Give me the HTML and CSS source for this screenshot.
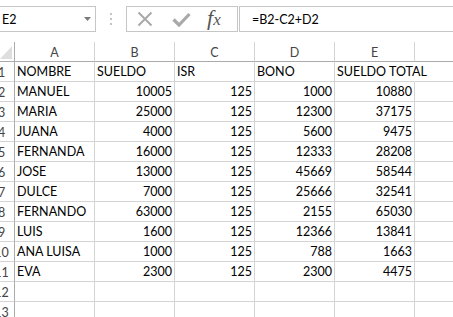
FILE: index.html
```html
<!DOCTYPE html>
<html lang="es">
<head>
<meta charset="utf-8">
<title>Hoja</title>
<link rel="stylesheet" href="styles.css">
</head>
<body>
<div class="toolbar">
  <div class="namebox"><span>E2</span><svg class="arrow" width="7" height="4" viewBox="0 0 7 4"><path d="M0 0H7L3.5 4Z" fill="#7a7a7a"/></svg></div>
  <div class="grip"><i></i><i></i><i></i></div>
  <div class="fbuttons">
    <svg class="ico-x" width="16" height="16" viewBox="0 0 16 16"><path d="M1.5 1.5L14.5 14.5M14.5 1.5L1.5 14.5" stroke="#a9a9a9" stroke-width="2" fill="none"/></svg>
    <svg class="ico-ok" width="19" height="15" viewBox="0 0 19 15"><path d="M1.5 7.5L7 13L17.5 2" stroke="#a9a9a9" stroke-width="3.2" fill="none"/></svg>
    <span class="fx">f<span class="fx-x">x</span></span>
  </div>
  <div class="finput">=B2-C2+D2</div>
</div>
<div class="sheet">
  <div class="corner"><svg width="12" height="13" viewBox="0 0 12 13"><path d="M12 0V13H0Z" fill="#dedede"/></svg></div>
  <div class="ch">A</div><div class="ch">B</div><div class="ch">C</div><div class="ch">D</div><div class="ch">E</div><div class="ch"></div>

  <div class="rh">1</div><div class="c">NOMBRE</div><div class="c">SUELDO</div><div class="c">ISR</div><div class="c">BONO</div><div class="c spill">SUELDO TOTAL</div><div class="c"></div>
  <div class="rh">2</div><div class="c">MANUEL</div><div class="c n">10005</div><div class="c n">125</div><div class="c n">1000</div><div class="c n">10880</div><div class="c"></div>
  <div class="rh">3</div><div class="c">MARIA</div><div class="c n">25000</div><div class="c n">125</div><div class="c n">12300</div><div class="c n">37175</div><div class="c"></div>
  <div class="rh">4</div><div class="c">JUANA</div><div class="c n">4000</div><div class="c n">125</div><div class="c n">5600</div><div class="c n">9475</div><div class="c"></div>
  <div class="rh">5</div><div class="c">FERNANDA</div><div class="c n">16000</div><div class="c n">125</div><div class="c n">12333</div><div class="c n">28208</div><div class="c"></div>
  <div class="rh">6</div><div class="c">JOSE</div><div class="c n">13000</div><div class="c n">125</div><div class="c n">45669</div><div class="c n">58544</div><div class="c"></div>
  <div class="rh">7</div><div class="c">DULCE</div><div class="c n">7000</div><div class="c n">125</div><div class="c n">25666</div><div class="c n">32541</div><div class="c"></div>
  <div class="rh">8</div><div class="c">FERNANDO</div><div class="c n">63000</div><div class="c n">125</div><div class="c n">2155</div><div class="c n">65030</div><div class="c"></div>
  <div class="rh">9</div><div class="c">LUIS</div><div class="c n">1600</div><div class="c n">125</div><div class="c n">12366</div><div class="c n">13841</div><div class="c"></div>
  <div class="rh">10</div><div class="c">ANA LUISA</div><div class="c n">1000</div><div class="c n">125</div><div class="c n">788</div><div class="c n">1663</div><div class="c"></div>
  <div class="rh">11</div><div class="c">EVA</div><div class="c n">2300</div><div class="c n">125</div><div class="c n">2300</div><div class="c n">4475</div><div class="c"></div>
  <div class="rh">12</div><div class="c"></div><div class="c"></div><div class="c"></div><div class="c"></div><div class="c"></div><div class="c"></div>
  <div class="rh">13</div><div class="c"></div><div class="c"></div><div class="c"></div><div class="c"></div><div class="c"></div><div class="c"></div>
</div>
</body>
</html>
```

FILE: styles.css
```css
html, body {
  margin: 0;
  padding: 0;
  height: 100%;
  overflow: hidden;
  background: #fff;
}
body {
  font-family: Lato, "Liberation Sans", sans-serif;
  color: #000;
}

/* ---------- formula bar ---------- */
.toolbar {
  display: flex;
  height: 26px;
  margin-top: 6px;
}
.namebox {
  box-sizing: border-box;
  width: 116px;
  margin-left: -20px;
  border: 1px solid #c6c6c6;
  display: flex;
  align-items: center;
  justify-content: space-between;
  padding: 0 4px 0 21px;
  font-size: 12.5px;
}
.arrow { display: block; }
.grip {
  width: 30px;
  display: flex;
  flex-direction: column;
  align-items: center;
  justify-content: center;
  gap: 3px;
}
.grip i {
  display: block;
  width: 2px;
  height: 2px;
  background: #c4c4c4;
}
.fbuttons {
  box-sizing: border-box;
  width: 112px;
  border: 1px solid #c6c6c6;
  display: flex;
  align-items: center;
}
.ico-x { margin-left: 10px; display: block; }
.ico-ok { margin-left: 19px; display: block; }
.fx {
  margin-left: 16px;
  font-family: "Liberation Serif", "DejaVu Serif", serif;
  font-style: italic;
  font-size: 22px;
  color: #555;
  line-height: 1;
  padding-bottom: 2px;
}
.fx-x { font-size: 17px; }
.finput {
  box-sizing: border-box;
  flex: 1;
  margin-left: 1px;
  margin-right: -10px;
  border: 1px solid #c6c6c6;
  display: flex;
  align-items: center;
  padding-left: 12px;
  font-size: 12.5px;
}

/* ---------- grid ---------- */
.sheet {
  display: grid;
  grid-template-columns: 26px repeat(6, 80px);
  grid-auto-rows: 20px;
  margin-top: 10px;
  margin-left: -11px;
  font-size: 12.5px;
}
.sheet > div {
  box-sizing: border-box;
  white-space: nowrap;
}
.corner {
  border-right: 1px solid #ababab;
  border-bottom: 1px solid #ababab;
  display: flex;
  align-items: flex-end;
  justify-content: flex-end;
  padding: 0 2px 2px 0;
}
.corner svg { display: block; }
.ch {
  border-right: 1px solid #d4d4d4;
  border-bottom: 1px solid #ababab;
  display: flex;
  align-items: center;
  justify-content: center;
  color: #444;
  padding-top: 2px;
}
.rh {
  border-right: 1px solid #ababab;
  border-bottom: 1px solid #d4d4d4;
  display: flex;
  align-items: center;
  justify-content: center;
  color: #444;
  padding-top: 2px;
}
.c {
  border-right: 1px solid #d4d4d4;
  border-bottom: 1px solid #d4d4d4;
  display: flex;
  align-items: flex-end;
  padding: 0 2px 2px 2px;
  line-height: 14px;
}
.c.n { justify-content: flex-end; }
.c.spill {
  overflow: visible;
  border-right-color: transparent;
  position: relative;
  z-index: 1;
}
```
